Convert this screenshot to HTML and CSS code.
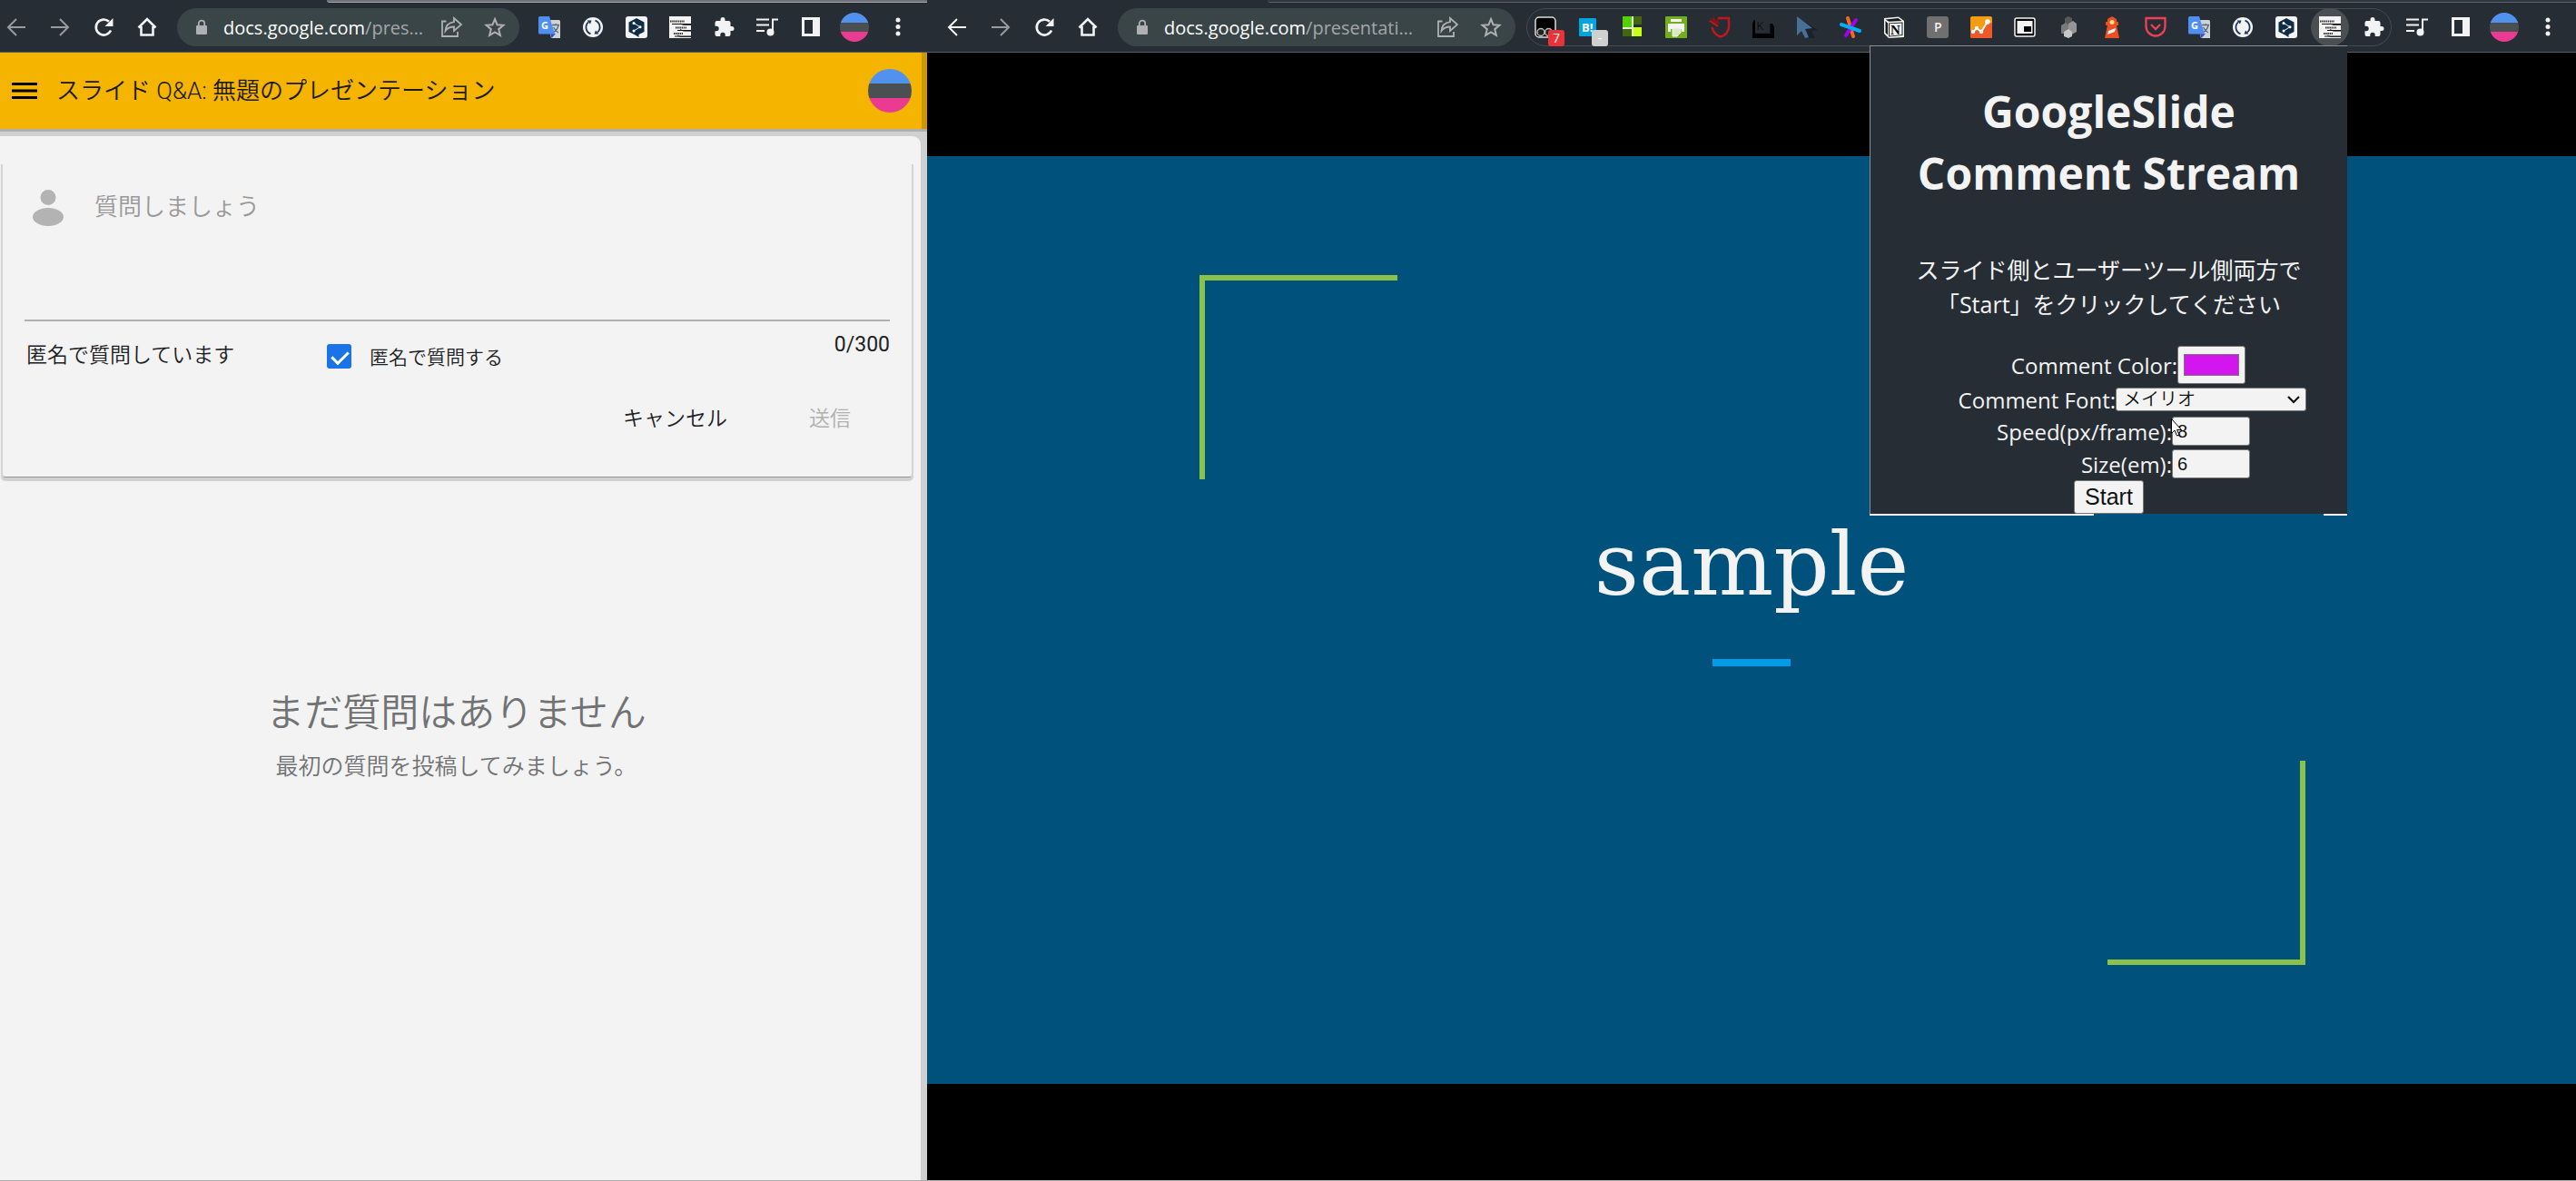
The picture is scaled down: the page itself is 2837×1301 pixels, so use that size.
FILE: index.html
```html
<!DOCTYPE html>
<html lang="ja">
<head>
<meta charset="utf-8">
<title>GoogleSlide Comment Stream</title>
<link rel="stylesheet" href="styles.css">
</head>
<body>
<svg class="sprite" aria-hidden="true">
  <symbol id="back" viewBox="0 0 24 24"><path d="M22 12H4M12 3L3 12l9 9" fill="none" stroke="currentColor" stroke-width="2"/></symbol>
  <symbol id="forward" viewBox="0 0 24 24"><path d="M2 12h18M12 3l9 9-9 9" fill="none" stroke="currentColor" stroke-width="2"/></symbol>
  <symbol id="reload" viewBox="0 0 24 24"><path d="M20 15.500A8.500 8.500 0 1 1 18 5.800" fill="none" stroke="currentColor" stroke-width="2.600"/><path d="M22.500 2v9h-9z" fill="currentColor"/></symbol>
  <symbol id="home" viewBox="0 0 24 24"><path d="M5.500 11v9.500h13V11M2.500 12.500L12 3l9.500 9.500" fill="none" stroke="currentColor" stroke-width="2.600"/></symbol>
  <symbol id="lock" viewBox="0 0 12 18"><path d="M2.800 8V4.800a3.200 3.200 0 0 1 6.400 0V8" fill="none" stroke="currentColor" stroke-width="1.800"/><rect y="7" width="12" height="10" rx="1" fill="currentColor"/></symbol>
  <symbol id="share" viewBox="0 0 24 24"><path d="M6.500 5.500H2V22h17v-5" fill="none" stroke="currentColor" stroke-width="1.800"/><path d="M15 2l8 7-8 7v-4.500c-4 0-7 1-9.500 4.500C6 10 9 7 15 6.200z" fill="none" stroke="currentColor" stroke-width="1.800"/></symbol>
  <symbol id="star" viewBox="0 0 24 24"><path d="M12 3l2.600 6.300 6.800.5-5.200 4.400 1.700 6.700L12 17.300l-5.900 3.600 1.700-6.700-5.200-4.400 6.800-.5z" fill="none" stroke="currentColor" stroke-width="2"/></symbol>
  <symbol id="translate" viewBox="0 0 24 24"><path d="M9 4h13.500q1.500 0 1.500 1.500V24H14z" fill="#d0d3d5"/><path d="M15 9.500h8M19 8v2M22 10q-1 5-6 8M16.500 12q2 4 5.500 6" fill="none" stroke="#5c6b7b" stroke-width="1.300"/><path d="M13 19h6l-4.500 5z" fill="#3548c8"/><path d="M1.500 0H12l6 19.500H1.500Q0 19.500 0 18V1.500Q0 0 1.500 0z" fill="#4f8ff0"/><text x="3" y="14" font-size="11" font-weight="700" fill="#fff">G</text></symbol>
  <symbol id="sync" viewBox="0 0 24 24"><circle cx="12" cy="12" r="11" fill="#f3f3f3"/><path d="M9.500 19.300a7.700 7.700 0 0 1-2.500-13M14.500 4.700a7.700 7.700 0 0 1 2.500 13" fill="none" stroke="#17365c" stroke-width="1.800"/><path d="M5.500 4.500l5 0-1.500 4zM18.500 19.500l-5 0 1.500-4z" fill="#17365c"/></symbol>
  <symbol id="deepl" viewBox="0 0 24 24"><rect width="24" height="24" rx="3" fill="#f3f3f3"/><path d="M12 2l8.500 4.500v10.500L14.500 20v3L11 20.800 3.500 17V6.500z" fill="#0f2b46"/><path d="M9 7.500l7 4.200-7 4.300" fill="none" stroke="#fff" stroke-width="1"/><circle cx="9" cy="7.500" r="1.500" fill="#fff"/><circle cx="16" cy="11.700" r="1.500" fill="#fff"/><circle cx="9" cy="16" r="1.500" fill="#fff"/></symbol>
  <symbol id="stream" viewBox="0 0 24 24"><path d="M0 0h24v24H0z" fill="#f3f3f3"/><path d="M3 8.500h21M9 15.500h15M6 22h18" stroke="#111" stroke-width="1"/><path d="M12 8l4 1.500h8M12 14.500l4 1.700h8M9 21l4 1.500h11" stroke="#111" fill="none" stroke-width=".8"/><path d="M1 5.500h16M7 12.500h12M5 19h10" stroke="#333" stroke-width="1.800" stroke-dasharray="1.500 .7"/></symbol>
  <symbol id="puzzle" viewBox="0 0 24 24"><path d="M21 11h-1.500V7a2 2 0 0 0-2-2h-4V3.500a2.500 2.500 0 0 0-5 0V5h-4a2 2 0 0 0-2 2v3.800H4a2.700 2.700 0 0 1 0 5.400H2.500V20a2 2 0 0 0 2 2h3.800v-1.500a2.700 2.700 0 0 1 5.400 0V22h3.800a2 2 0 0 0 2-2v-4H21a2.500 2.500 0 0 0 0-5z" fill="currentColor"/></symbol>
  <symbol id="queue" viewBox="0 0 24 24"><path d="M0 3.500h14M0 9.500h14M0 16h9M18 18V3.500h6" fill="none" stroke="currentColor" stroke-width="2"/><circle cx="15.500" cy="17.500" r="4" fill="currentColor"/></symbol>
  <symbol id="side" viewBox="0 0 24 24"><path d="M2 1h20v21H2zM5 4v15h9V4z" fill="currentColor" fill-rule="evenodd"/></symbol>
  <symbol id="dots" viewBox="0 0 24 24"><circle cx="12" cy="4" r="2.500" fill="currentColor"/><circle cx="12" cy="11.500" r="2.500" fill="currentColor"/><circle cx="12" cy="19" r="2.500" fill="currentColor"/></symbol>
</svg>

<main class="desktop">
  <section class="window">
    <div class="tabline tabline-a"></div>
    <nav class="toolbar toolbar-a">
      <button class="ic dim" aria-label="戻る"><svg><use href="#back"/></svg></button>
      <button class="ic dim" aria-label="進む"><svg><use href="#forward"/></svg></button>
      <button class="ic" aria-label="再読み込み"><svg><use href="#reload"/></svg></button>
      <button class="ic" aria-label="ホーム"><svg><use href="#home"/></svg></button>
      <div class="address">
        <svg class="lock"><use href="#lock"/></svg>
        <a class="url" href="#"><b>docs.google.com</b>/pres…</a>
        <button class="ic" aria-label="共有"><svg><use href="#share"/></svg></button>
        <button class="ic" aria-label="ブックマーク"><svg><use href="#star"/></svg></button>
      </div>
      <button class="ic" aria-label="翻訳"><svg><use href="#translate"/></svg></button>
      <button class="ic" aria-label="同期"><svg><use href="#sync"/></svg></button>
      <button class="ic" aria-label="DeepL"><svg><use href="#deepl"/></svg></button>
      <button class="ic" aria-label="Comment Stream"><svg><use href="#stream"/></svg></button>
      <button class="ic" aria-label="拡張機能"><svg><use href="#puzzle"/></svg></button>
      <button class="ic" aria-label="メディア"><svg><use href="#queue"/></svg></button>
      <button class="ic" aria-label="サイドパネル"><svg><use href="#side"/></svg></button>
      <button class="avatar" aria-label="プロフィール"></button>
      <button class="ic" aria-label="メニュー"><svg><use href="#dots"/></svg></button>
    </nav>

    <header class="appbar">
      <button class="burger" aria-label="メニュー"><svg viewBox="0 0 28 18"><path d="M0 1.500h28M0 9h28M0 16.500h28" stroke="#000" stroke-width="3"/></svg></button>
      <h1>スライド Q&amp;A: 無題のプレゼンテーション</h1>
      <button class="avatar avatar-lg" aria-label="アカウント"></button>
    </header>

    <div class="qa">
      <div class="qa-body">
        <form class="card">
          <div class="ask">
            <svg class="person" viewBox="0 0 34 40"><circle cx="17" cy="8.500" r="8.500"/><ellipse cx="17" cy="30" rx="17" ry="10"/></svg>
            <textarea aria-label="質問" placeholder="質問しましょう"></textarea>
          </div>
          <div class="options">
            <span class="status">匿名で質問しています</span>
            <label class="check"><input type="checkbox" checked><span>匿名で質問する</span></label>
            <span class="count">0/300</span>
          </div>
          <div class="actions">
            <button type="button">キャンセル</button>
            <button type="button" disabled>送信</button>
          </div>
        </form>
        <div class="empty">
          <h2>まだ質問はありません</h2>
          <p>最初の質問を投稿してみましょう。</p>
        </div>
      </div>
    </div>
  </section>

  <section class="window">
    <div class="tabline tabline-b"></div>
    <nav class="toolbar toolbar-b">
      <button class="ic" aria-label="戻る"><svg><use href="#back"/></svg></button>
      <button class="ic dim" aria-label="進む"><svg><use href="#forward"/></svg></button>
      <button class="ic" aria-label="再読み込み"><svg><use href="#reload"/></svg></button>
      <button class="ic" aria-label="ホーム"><svg><use href="#home"/></svg></button>
      <div class="address">
        <svg class="lock"><use href="#lock"/></svg>
        <a class="url" href="#"><b>docs.google.com</b>/presentati…</a>
        <button class="ic" aria-label="共有"><svg><use href="#share"/></svg></button>
        <button class="ic" aria-label="ブックマーク"><svg><use href="#star"/></svg></button>
      </div>
      <div class="extensions">
        <button class="ic" aria-label="Tampermonkey"><svg viewBox="0 0 24 24"><rect x="1" y="1" width="22" height="22" rx="4" fill="#000" stroke="#ddd" stroke-width="1.500"/><circle cx="7" cy="17.500" r="4" fill="#222" stroke="#bbb" stroke-width="1.500"/><circle cx="15.500" cy="17.500" r="4" fill="#222" stroke="#bbb" stroke-width="1.500"/></svg><span class="badge red">7</span></button>
        <button class="ic" aria-label="はてなブックマーク"><svg viewBox="0 0 24 24"><rect x="1" y="2" width="19" height="20" rx="1" fill="#00a4de"/><text x="4" y="17" font-size="13" font-weight="700" fill="#fff">B!</text></svg><span class="badge">-</span></button>
        <button class="ic" aria-label="Tiles"><svg viewBox="0 0 24 24"><path d="M1 0h11v12H1z" fill="#55d000"/><path d="M13 0h9v9h-9zM1 14h10v8H1z" fill="#44660f"/><path d="M1 12h21v2H1zM11 0h2v22h-2z" fill="#e3f0cf"/><path d="M13 12h9v10h-9z" fill="#c8ff14"/><path d="M8 22h14v2H8z" fill="#123c12"/></svg></button>
        <button class="ic" aria-label="印刷"><svg viewBox="0 0 24 24"><rect width="24" height="24" rx="1" fill="#72ae1e"/><path d="M6 3h12v3H6zM3 8h18v9h-3v-3H6v3H3z" fill="#f3f3f3"/><path d="M8 13h9v5l-4 4H8z" fill="#dbeac4" stroke="#f3f3f3"/></svg></button>
        <button class="ic" aria-label="保護"><svg viewBox="0 0 24 24"><path d="M10 2h12v10q-1 8-9 10.500Q5 20 3.500 12" fill="none" stroke="#c4161c" stroke-width="2.400"/><path d="M0 1l4 2 1-3 3 5 2-3 1 7-4-1z" fill="#8c1215"/><path d="M1 5l9 6" stroke="#c4161c" stroke-width="2"/></svg></button>
        <button class="ic" aria-label="Keepa"><svg viewBox="0 0 24 24"><path d="M0 8q1-4 3-4v14h16V8h3q2 2 2 6v10H0z" fill="#000"/><path d="M3 18.500h16V9" fill="none" stroke="#17293e"/><text x="4.500" y="15" font-size="13" fill="#000">K</text></svg></button>
        <button class="ic" aria-label="カーソル"><svg viewBox="0 0 24 24"><path d="M6 4l18 11-7 1 4 8h-7z" fill="#1b222b"/><path d="M1 0l17 13-8 1 4 9-4 1-4-8-5 5z" fill="#4a6f96"/></svg></button>
        <button class="ic" aria-label="Asterisk"><svg viewBox="0 0 24 24"><path d="M9 2l6 20" stroke="#f26a21" stroke-width="4" stroke-linecap="round"/><path d="M18 4L7 21" stroke="#a200f5" stroke-width="4" stroke-linecap="round"/><path d="M2 9l20 7" stroke="#00aef5" stroke-width="4" stroke-linecap="round"/></svg></button>
        <button class="ic" aria-label="Notion"><svg viewBox="0 0 24 24"><path d="M1 2l16-1.500L23 5v18L6 24l-5-5z" fill="#f3f3f3"/><path d="M2.500 3.500l14-1.500 4 3-14 .700zM6 7.500l15.500-1V21L6 22.500zM2.500 5L5 7.500v13L2.500 18z" fill="#15181c"/><path d="M7 8.300l13.500-.8v12.700L7 21.500z" fill="#f3f3f3"/><text x="8" y="20" font-size="15" font-weight="700" font-family="Liberation Serif, serif">N</text></svg></button>
        <button class="ic" aria-label="P"><svg viewBox="0 0 24 24"><rect width="24" height="24" rx="3" fill="#707070"/><text x="8" y="17" font-size="14" font-weight="600" fill="#f3f3f3">P</text></svg></button>
        <button class="ic" aria-label="Analytics"><svg viewBox="0 0 24 24"><rect width="24" height="24" rx="2" fill="#f39c12"/><path d="M0 16l6-3 5 5 9-12 4 2v14a2 2 0 0 1-2 2H2a2 2 0 0 1-2-2z" fill="#f0582a"/><path d="M3 17l4-4 5 4 7-11" fill="none" stroke="#fff" stroke-width="2"/><circle cx="3" cy="17" r="2.200" fill="#fff"/><circle cx="7" cy="13" r="2.200" fill="#fff"/><circle cx="12" cy="17" r="2.200" fill="#fff"/><circle cx="19" cy="6" r="2.800" fill="#fff"/></svg></button>
        <button class="ic" aria-label="PiP"><svg viewBox="0 0 24 24"><rect x="1" y="2" width="22" height="20" rx="2" fill="#000" stroke="#f3f3f3" stroke-width="1.500"/><rect x="3.500" y="5" width="17" height="14" fill="#f3f3f3"/><path d="M11 11h8v6h-8z" fill="#000"/></svg></button>
        <button class="ic" aria-label="Blocks"><svg viewBox="0 0 24 24"><path d="M8 2l4-2 4 2v9H8z" fill="#585858"/><path d="M4 10l5-3 4 3v9H4z" fill="#7a7a7a"/><path d="M12 8l5-3 4 3v9l-5 3-4-2z" fill="#959595"/><path d="M7 17l5-3 4 3v5l-4 2-5-2z" fill="#c8c8c8"/></svg></button>
        <button class="ic" aria-label="Lighthouse"><svg viewBox="0 0 24 24"><path d="M12 0l5 3v3h2v4h-2l3 14H4L7 10H5V6h2V3z" fill="#ee4f22"/><circle cx="12" cy="6.500" r="2.500" fill="#ffe08a"/><path d="M8 16l8-3-1 4-8 3z" fill="#f3f3f3"/></svg></button>
        <button class="ic" aria-label="Pocket"><svg viewBox="0 0 24 24"><path d="M1.500 2h21v9a10.500 10.500 0 0 1-21 0z" fill="none" stroke="#ef4056" stroke-width="2.300"/><path d="M7 9l5 5 5-5" fill="none" stroke="#ef4056" stroke-width="2.300"/></svg></button>
        <button class="ic" aria-label="翻訳"><svg><use href="#translate"/></svg></button>
        <button class="ic" aria-label="同期"><svg><use href="#sync"/></svg></button>
        <button class="ic" aria-label="DeepL"><svg><use href="#deepl"/></svg></button>
        <button class="ic active" aria-label="Comment Stream"><svg><use href="#stream"/></svg></button>
        <button class="ic" aria-label="拡張機能"><svg><use href="#puzzle"/></svg></button>
      </div>
      <div class="tail">
        <button class="ic" aria-label="メディア"><svg><use href="#queue"/></svg></button>
        <button class="ic" aria-label="サイドパネル"><svg><use href="#side"/></svg></button>
        <button class="avatar" aria-label="プロフィール"></button>
        <button class="ic" aria-label="メニュー"><svg><use href="#dots"/></svg></button>
      </div>
    </nav>

    <div class="stage">
      <article class="slide">
        <i class="corner corner-tl"></i>
        <h2>sample</h2>
        <i class="rule"></i>
        <i class="corner corner-br"></i>
      </article>
    </div>

    <form class="popup">
      <div class="popup-body">
        <h1>GoogleSlide<br>Comment Stream</h1>
        <p>スライド側とユーザーツール側両方で<br>「Start」をクリックしてください</p>
        <div class="row row-color"><label for="color">Comment Color:</label><input type="color" id="color" value="#d416ee"></div>
        <div class="row row-font"><label for="font">Comment Font:</label><select id="font"><option>メイリオ</option></select></div>
        <div class="row"><label for="speed">Speed(px/frame):</label><input type="text" id="speed" value="8"></div>
        <div class="row"><label for="size">Size(em):</label><input type="text" id="size" value="6"></div>
        <button class="start" type="button">Start</button>
      </div>
      <svg class="pointer" viewBox="0 0 13 20"><path d="M.5.500v16l3.500-3.500 2.500 6 2.500-1-2.500-5.500h5z" fill="#fff" stroke="#000"/></svg>
    </form>
  </section>
</main>
</body>
</html>
```
FILE: styles.css
```css
* { box-sizing: border-box; }

body {
  margin: 0;
  font-family: Roboto, "Noto Sans CJK JP", sans-serif;
  font-weight: 350;
  background: #000;
}

h1, h2, p { margin: 0; font-weight: inherit; }
button { padding: 0; border: 0; background: none; color: inherit; font: inherit; }
.sprite { display: none; }

.desktop {
  display: grid;
  grid-template-columns: 1021fr 1816fr;
  min-height: 100vh;
  border-bottom: 1px solid #b0b0b0;
}

.window {
  position: relative;
  display: flex;
  flex-direction: column;
  min-width: 0;
  background: #272d34;
}

/* Browser toolbar */
.tabline { height: 3px; border-bottom: 1px solid #a5a7ac; background: #6f7278; }
.tabline-a { margin-left: 360px; border-bottom-left-radius: 8px; }
.tabline-b { margin-left: 375px; border-color: #5a6069; background: #30363e; border-bottom-left-radius: 8px; }

.toolbar {
  display: flex;
  align-items: center;
  gap: 24px;
  height: 55px;
  border-bottom: 1px solid #555b61;
  color: #f3f3f3;
  font-family: "Open Sans", sans-serif;
}
.toolbar-a { padding: 0 20px 0 6px; }
.toolbar-b { padding: 0 19px 0 21px; }

.ic { position: relative; flex: none; width: 24px; height: 24px; }
.ic svg { display: block; width: 24px; height: 24px; }
.dim { color: #999b9e; }

.address {
  display: flex;
  align-items: center;
  flex: 1;
  gap: 24px;
  min-width: 0;
  height: 42px;
  margin: 0 -3px;
  padding: 0 15px 0 21px;
  border-radius: 21px;
  background: #3a4548;
  color: #b0b0b0;
}
.lock { flex: none; width: 12px; height: 18px; }
.url {
  flex: 1;
  min-width: 0;
  margin: 0 -18px 0 -6px;
  white-space: nowrap;
  color: #a3a7a9;
  font-size: 20px;
  font-weight: 400;
  text-decoration: none;
}
.url b { color: #fff; font-weight: 400; }

.extensions {
  display: flex;
  align-items: center;
  gap: 24px;
  height: 42px;
  margin-left: -9px;
  padding: 0 7px 0 8px;
  border: 1px solid #434a51;
  border-radius: 21px;
}
.tail { display: flex; align-items: center; gap: 24px; margin-left: -8px; }
.active { border-radius: 50%; background: #4a4f52; box-shadow: 0 0 0 9px #4a4f52; }
.badge {
  position: absolute;
  right: -9px;
  bottom: -9px;
  width: 18px;
  height: 18px;
  border-radius: 3px;
  background: #d0d0d0;
  color: #fff;
  font-size: 14px;
  font-weight: 400;
  line-height: 18px;
}
.red { background: #ea3338; }

.avatar {
  flex: none;
  width: 32px;
  height: 32px;
  margin: 0 -4px;
  border-radius: 50%;
  background: linear-gradient(#5292ef 33%, #4a4f52 33% 67%, #eb3a92 67%);
}
.avatar-lg { width: 48px; height: 48px; margin: 0; }

/* Q&A window */
.appbar {
  display: flex;
  align-items: center;
  height: 84px;
  padding: 0 11px 0 13px;
  border-right: 6px solid #cc9800;
  background: #f4b400;
}
.burger { width: 28px; height: 18px; margin-right: 21px; }
.burger svg { display: block; }
.appbar h1 { flex: 1; color: #1c1a10; font-size: 26px; line-height: 32px; }

.qa {
  display: flex;
  flex: 1;
  padding: 5px 7px 0 0;
  border-top: 3px solid #b0b0b0;
  background: #d0d0d0;
}
.qa-body {
  flex: 1;
  padding: 31px 8px 0 1px;
  border-top-right-radius: 9px;
  background: #f3f3f3;
}

.card {
  height: 345px;
  padding: 24px 24px 0;
  border: solid #d4d4d4;
  border-width: 0 2px;
  border-bottom: 1px solid #909392;
  border-radius: 0 0 5px 5px;
  box-shadow: 0 4px 1px #d0d0d0;
  color: #202124;
}
.ask {
  display: flex;
  gap: 34px;
  height: 149px;
  padding: 4px 9px;
  border-bottom: 2px solid #b0b0b0;
}
.person { flex: none; width: 34px; height: 40px; fill: #b3b3b3; }
textarea {
  flex: 1;
  padding: 0;
  border: 0;
  outline: 0;
  resize: none;
  background: none;
  font: inherit;
  font-size: 26px;
  line-height: 38px;
}
textarea::placeholder { color: #999; }

.options { display: flex; padding: 14px 0 0 2px; }
.status { width: 331px; font-size: 23px; line-height: 48px; }
.check { display: flex; align-items: center; gap: 20px; height: 48px; font-size: 21px; }
.check input {
  width: 27px;
  height: 27px;
  margin: 0;
  appearance: none;
  border-radius: 3px;
  background: #1a73e8;
  position: relative;
}
.check input:checked::after {
  content: "";
  position: absolute;
  left: 9px;
  top: 4px;
  width: 8px;
  height: 15px;
  border: solid #fff;
  border-width: 0 3px 3px 0;
  transform: rotate(45deg);
}
.count { margin-left: auto; font-size: 23px; font-weight: 400; line-height: 24px; }
.actions {
  display: flex;
  justify-content: flex-end;
  gap: 90px;
  padding: 26px 43px 0 0;
  font-size: 23px;
  line-height: 40px;
}
.actions :disabled { color: #b0b0b0; }

.empty { padding: 228px 2px 0 0; color: #707273; text-align: center; }
.empty h2 { font-size: 42px; line-height: 64px; }
.empty p { font-size: 25px; line-height: 54px; }

/* Presentation window */
.stage {
  display: flex;
  flex: 1;
  align-items: center;
  padding-top: 8px;
  background: #000;
}
.slide {
  position: relative;
  display: flex;
  flex: 1;
  flex-direction: column;
  align-items: center;
  justify-content: center;
  aspect-ratio: 16 / 9;
  background: #00517b;
}
.slide h2 {
  color: #f3f3f3;
  font: 400 96px/120px "DejaVu Serif", serif;
}
.rule { width: 86px; height: 8px; margin: 44px 0 70px; background: #039be5; }
.corner { position: absolute; width: 12%; height: 22%; border: 0 solid #8bc34a; }
.corner-tl { left: 16.5%; top: 12.8%; border-width: 6px 0 0 6px; }
.corner-br { right: 16.4%; bottom: 12.8%; border-width: 0 6px 6px 0; }

/* Extension popup */
.popup { position: absolute; top: 50px; right: 252px; width: 526px; }
.popup-body {
  display: flex;
  flex-direction: column;
  align-items: center;
  height: 516px;
  padding-top: 38px;
  border: solid #8c9094;
  border-width: 1px 0 0 1px;
  background: #272d34;
  color: #f3f3f3;
  font-family: "Open Sans", "Noto Sans CJK JP", sans-serif;
  font-size: 24px;
  font-weight: 400;
}
.popup::after {
  content: "";
  display: block;
  height: 2px;
  background: linear-gradient(90deg, #f3f3f3 47%, transparent 47% 95%, #f3f3f3 95%);
}
.popup h1 { font-size: 48px; font-weight: 700; line-height: 68px; text-align: center; }
.popup p { margin: 53px 0 27px; font-size: 25px; line-height: 38px; text-align: center; }
.row {
  display: flex;
  align-items: center;
  align-self: stretch;
  justify-content: flex-end;
  height: 36px;
  padding-right: 107px;
}
.row-color { height: 42px; padding-right: 112px; }
.row-font { height: 34px; padding-right: 45px; }
.row input, .row select, .start {
  border: 1px solid #767676;
  border-radius: 3px;
  background: #f3f3f3;
  color: #111;
  font-family: "Liberation Sans", "Noto Sans CJK JP", sans-serif;
}
.row input { width: 86px; height: 32px; padding: 0 5px; font-size: 20px; }
.row-color input { width: 75px; height: 42px; padding: 4px; }
.row select {
  width: 210px;
  height: 26px;
  padding: 0 7px;
  appearance: none;
  background: #f3f3f3 url("data:image/svg+xml,%3Csvg xmlns='http://www.w3.org/2000/svg' width='14' height='9'%3E%3Cpath d='M1 1l6 6 6-6' fill='none' stroke='%23111' stroke-width='2.200'/%3E%3C/svg%3E") no-repeat right 6px center;
  font-size: 20px;
  font-weight: 350;
  line-height: 22px;
}
.start { width: 77px; height: 37px; font-size: 25px; }
.pointer { position: absolute; left: 332px; top: 411px; width: 13px; height: 20px; }
```
